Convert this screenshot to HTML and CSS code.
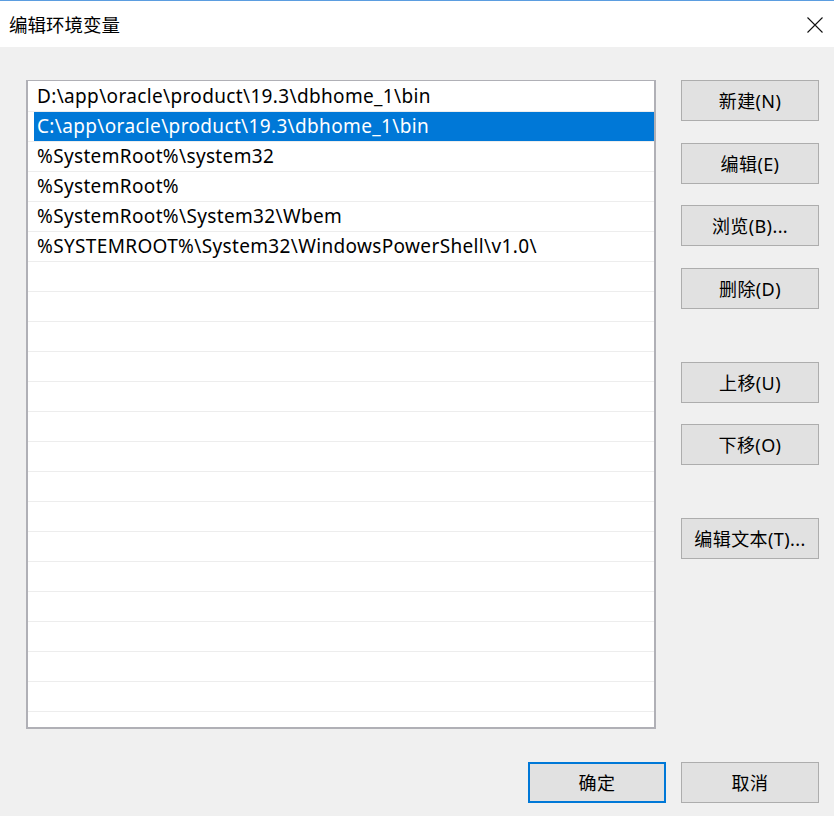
FILE: index.html
```html
<!DOCTYPE html>
<html lang="zh-CN">
<head>
<meta charset="utf-8">
<title>编辑环境变量</title>
<link rel="stylesheet" href="styles.css">
</head>
<body>
<div class="dialog">
  <div class="titlebar">
    <span class="title">编辑环境变量</span>
    <span class="close" aria-label="关闭">
      <svg width="16" height="16" viewBox="0 0 16 16"><path d="M0.5 0.5 L15.5 15.5 M15.5 0.5 L0.5 15.5" stroke="#111" stroke-width="1.1" fill="none"/></svg>
    </span>
  </div>
  <div class="main">
    <div class="list">
      <div class="row">D:\app\oracle\product\19.3\dbhome_1\bin</div>
      <div class="row selected">C:\app\oracle\product\19.3\dbhome_1\bin</div>
      <div class="row">%SystemRoot%\system32</div>
      <div class="row">%SystemRoot%</div>
      <div class="row">%SystemRoot%\System32\Wbem</div>
      <div class="row">%SYSTEMROOT%\System32\WindowsPowerShell\v1.0\</div>
      <div class="row"></div>
      <div class="row"></div>
      <div class="row"></div>
      <div class="row"></div>
      <div class="row"></div>
      <div class="row"></div>
      <div class="row"></div>
      <div class="row"></div>
      <div class="row"></div>
      <div class="row"></div>
      <div class="row"></div>
      <div class="row"></div>
      <div class="row"></div>
      <div class="row"></div>
      <div class="row"></div>
      <div class="row"></div>
    </div>
    <div class="side">
      <button class="btn">新建(N)</button>
      <button class="btn">编辑(E)</button>
      <button class="btn">浏览(B)...</button>
      <button class="btn">删除(D)</button>
      <div class="spacer"></div>
      <button class="btn">上移(U)</button>
      <button class="btn">下移(O)</button>
      <div class="spacer"></div>
      <button class="btn">编辑文本(T)...</button>
    </div>
  </div>
  <div class="footer">
    <button class="btn default">确定</button>
    <button class="btn">取消</button>
  </div>
</div>
</body>
</html>
```

FILE: styles.css
```css
* { box-sizing: border-box; }
html, body {
  margin: 0;
  padding: 0;
  background: #f0f0f0;
  font-family: "Noto Sans", "Noto Sans CJK SC", sans-serif;
  font-size: 18px;
  color: #000;
}
.dialog {
  width: 834px;
  height: 816px;
  overflow: hidden;
}
.titlebar {
  height: 47px;
  background: #fff;
  border-top: 1px solid #5b9de0;
  display: flex;
  align-items: center;
  justify-content: space-between;
  padding: 0 11px 0 9px;
}
.title {
  font-family: "Noto Sans CJK SC", sans-serif;
  font-size: 18.5px;
  color: #000;
}
.close {
  display: flex;
  width: 16px;
  height: 16px;
  margin-top: 2px;
}
.main {
  display: flex;
  gap: 25px;
  padding: 33px 15px 0 26px;
}
.list {
  width: 630px;
  height: 649px;
  background: #fff;
  border: 2px solid #b0b0b6;
  border-top-width: 1px;
  padding-top: 1px;
  overflow: hidden;
}
.row {
  height: 30px;
  border-bottom: 1px solid #ededed;
  padding-left: 9px;
  line-height: 28px;
  white-space: nowrap;
  font-family: "Noto Sans", "Noto Sans CJK SC", sans-serif;
  font-size: 19px;
  letter-spacing: 0.35px;
}
.row.selected {
  background: linear-gradient(to right, transparent 6px, #0078d7 6px);
  color: #fff;
}
.side {
  width: 138px;
  display: flex;
  flex-direction: column;
  gap: 21.5px;
}
.spacer {
  height: 10px;
}
.btn {
  width: 138px;
  height: 41px;
  margin: 0;
  padding: 0 0 1px;
  background: #e1e1e1;
  border: 1px solid #adadad;
  font-family: "Noto Sans", "Noto Sans CJK SC", sans-serif;
  font-size: 18px;
  letter-spacing: 0.4px;
  color: #000;
  border-radius: 0;
}
.btn.default {
  border: 2px solid #0078d7;
}
.footer {
  display: flex;
  justify-content: flex-end;
  gap: 15px;
  padding: 33px 15px 0 0;
}
```
